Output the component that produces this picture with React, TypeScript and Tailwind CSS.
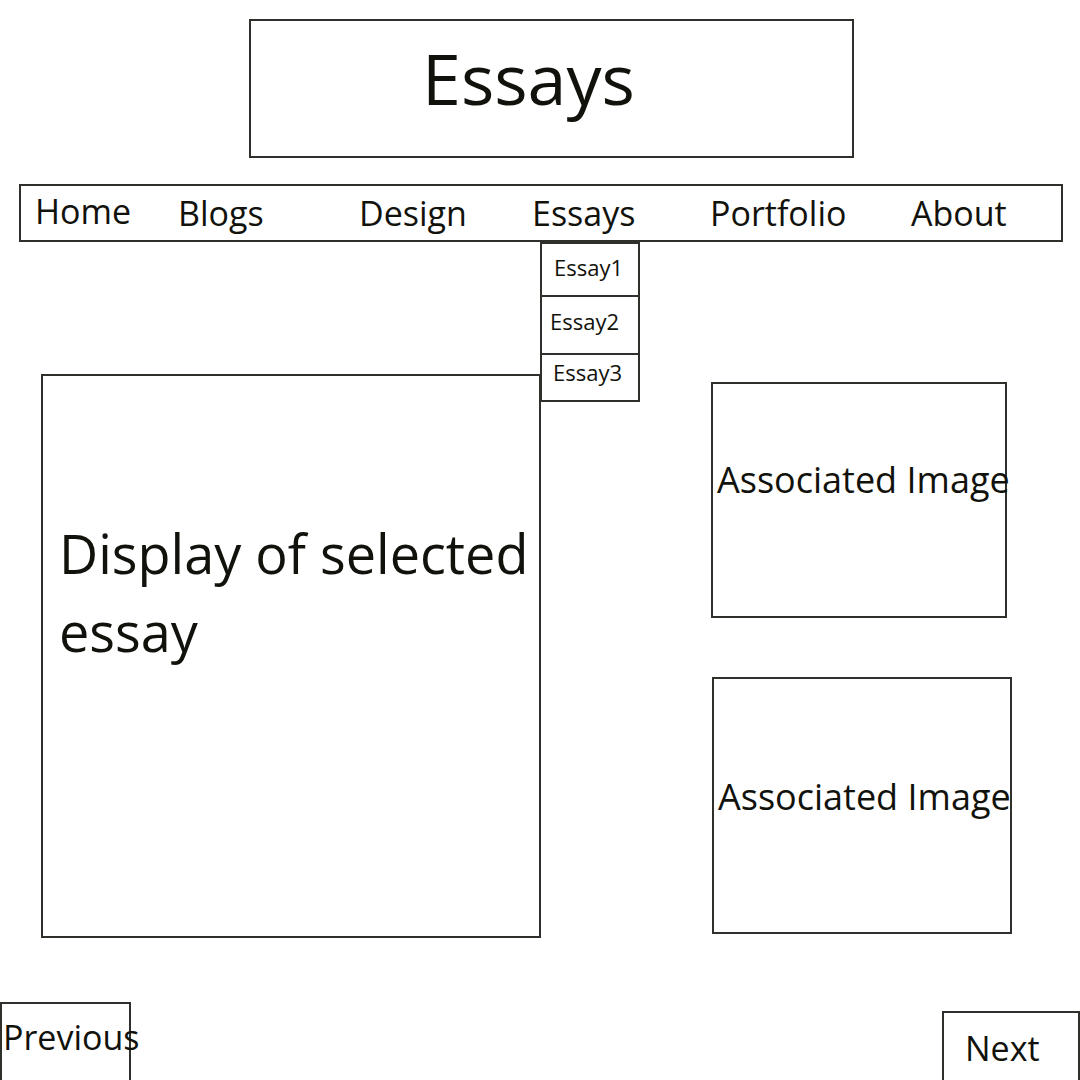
const font = "font-['Open_Sans','Noto_Sans',sans-serif]"

const essays = [
  { label: 'Essay1', h: 'h-[51px]', pl: 'pl-[12px]', pb: 'pb-[6px]' },
  { label: 'Essay2', h: 'h-[58px]', pl: 'pl-[8px]', pb: 'pb-[8px]' },
  { label: 'Essay3', h: 'h-[47px]', pl: 'pl-[11px]', pb: 'pb-[12px]' },
]

const navItems = [
  { label: 'Home', w: 'w-[143px]', lift: 'mb-[5px]' },
  { label: 'Blogs', w: 'w-[181px]', lift: '' },
  { label: 'Design', w: 'w-[173px]', lift: '' },
  { label: 'Essays', w: 'w-[178px]', lift: '' },
  { label: 'Portfolio', w: 'w-[201px]', lift: '' },
  { label: 'About', w: 'w-[140px]', lift: '' },
]

export default function App() {
  return (
    <div className={`${font} relative h-[1080px] w-[1080px] overflow-hidden bg-white text-[#12120c]`}>
      {/* Page title */}
      <div className="pt-[19px]">
        <div className="ml-[249px] flex h-[139px] w-[605px] items-center border-2 border-[#2f2f2b] pb-[22px] pl-[171px]">
          <span className="text-[70px] leading-none">Essays</span>
        </div>
      </div>

      {/* Nav bar */}
      <nav className="relative ml-[19px] mt-[26px] flex h-[58px] w-[1044px] items-center border-2 border-[#2f2f2b] pl-[14px]">
        {navItems.map(item => (
          <span key={item.label} className={`${item.w} ${item.lift} text-[34px] leading-none`}>
            {item.label}
          </span>
        ))}

        {/* Essays dropdown */}
        <div className="absolute left-[519px] top-[56px] z-10 flex w-[100px] flex-col border-2 border-[#2f2f2b] bg-white">
          {essays.map((e, i) => (
            <div
              key={e.label}
              className={`${e.h} ${e.pl} ${e.pb} flex items-center text-[22px] leading-none ${i > 0 ? 'border-t-2 border-[#2f2f2b]' : ''}`}
            >
              {e.label}
            </div>
          ))}
        </div>
      </nav>

      {/* Main content */}
      <div className="mt-[132px] flex items-start">
        <div className="ml-[41px] h-[564px] w-[500px] border-2 border-[#2f2f2b] pl-[16px] pt-[138px]">
          <p className="text-[54px] leading-[78px]">Display of selected essay</p>
        </div>

        <div className="ml-[170px] flex flex-col items-start">
          <div className="mt-[8px] flex h-[236px] w-[296px] items-center border-2 border-[#2f2f2b] pb-[40px] pl-[4px]">
            <span className="whitespace-nowrap text-[36px] leading-none">Associated Image</span>
          </div>
          <div className="ml-[1px] mt-[59px] flex h-[257px] w-[300px] items-center border-2 border-[#2f2f2b] pb-[18px] pl-[4px]">
            <span className="whitespace-nowrap text-[36px] leading-none">Associated Image</span>
          </div>
        </div>
      </div>

      {/* Pager */}
      <div className="mt-[64px] flex items-start justify-between">
        <button className="flex h-[82px] w-[131px] items-start border-2 border-[#2f2f2b] pl-[1px] pt-[16px] text-left">
          <span className="whitespace-nowrap text-[34px] leading-none">Previous</span>
        </button>
        <button className="mt-[9px] flex h-[74px] w-[138px] items-start border-2 border-[#2f2f2b] pl-[21px] pt-[18px] text-left">
          <span className="text-[34px] leading-none">Next</span>
        </button>
      </div>
    </div>
  )
}
